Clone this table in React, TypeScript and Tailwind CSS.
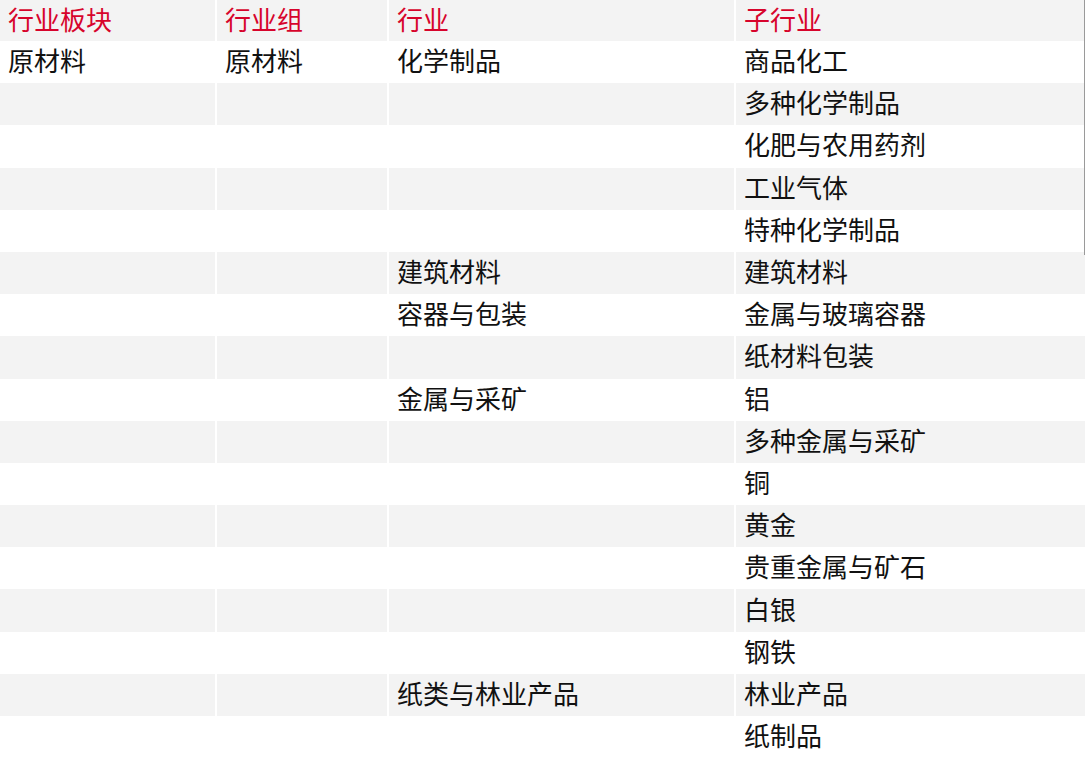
const rows: [string, string, string, string][] = [
  ["原材料", "原材料", "化学制品", "商品化工"],
  ["", "", "", "多种化学制品"],
  ["", "", "", "化肥与农用药剂"],
  ["", "", "", "工业气体"],
  ["", "", "", "特种化学制品"],
  ["", "", "建筑材料", "建筑材料"],
  ["", "", "容器与包装", "金属与玻璃容器"],
  ["", "", "", "纸材料包装"],
  ["", "", "金属与采矿", "铝"],
  ["", "", "", "多种金属与采矿"],
  ["", "", "", "铜"],
  ["", "", "", "黄金"],
  ["", "", "", "贵重金属与矿石"],
  ["", "", "", "白银"],
  ["", "", "", "钢铁"],
  ["", "", "纸类与林业产品", "林业产品"],
  ["", "", "", "纸制品"],
];

const headers = ["行业板块", "行业组", "行业", "子行业"];

const gridCols = "grid grid-cols-[215px_170px_345px_349px] gap-x-[2px]";

export default function App() {
  return (
    <div
      className="relative h-[760px] w-[1088px] overflow-hidden bg-white"
      style={{ fontFamily: '"Noto Sans CJK SC", "Noto Sans", sans-serif' }}
    >
      {/* header */}
      <div className={gridCols}>
        {headers.map((h) => (
          <div key={h} className="flex h-[41px] items-center bg-[#f3f3f3] pb-[4px] pl-[8px] text-[26px] leading-none text-[#d7042c]">
            {h}
          </div>
        ))}
      </div>

      {/* body */}
      {rows.map((r, i) => (
        <div key={i} className={gridCols}>
          {r.map((c, j) => (
            <div
              key={j}
              className={
                "flex h-[42.2px] items-center pb-[4px] pl-[8px] text-[26px] leading-none text-[#111111] " +
                (i % 2 === 1 ? "bg-[#f3f3f3]" : "bg-white")
              }
            >
              {c}
            </div>
          ))}
        </div>
      ))}

      {/* scrollbar thumb */}
      <div className="absolute right-[3px] top-0 h-[255px] w-px bg-[#9a9a9a]" />
    </div>
  );
}
